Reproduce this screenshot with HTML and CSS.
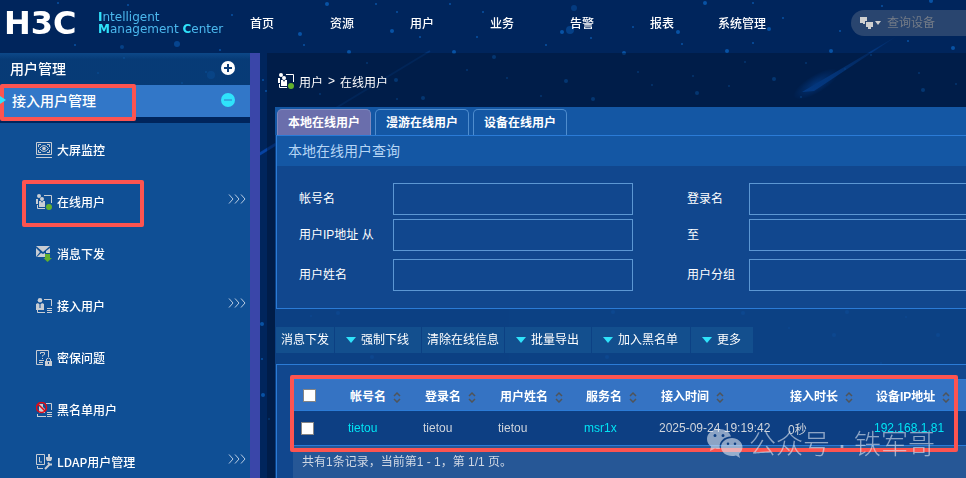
FILE: index.html
```html
<!DOCTYPE html>
<html lang="zh-CN">
<head>
    <meta charset="UTF-8">
    <meta name="viewport" content="width=device-width, initial-scale=1.0">
    <title>H3C iMC - 在线用户</title>
    <link rel="stylesheet" href="styles.css">
</head>
<body>
    <svg class="sky" aria-hidden="true">
        <defs>
            <linearGradient id="tail" x1="0" y1="1" x2="1" y2="0">
                <stop offset="0" stop-color="#0a5fd0"/>
                <stop offset="1" stop-color="#0a5fd0" stop-opacity="0"/>
            </linearGradient>
            <radialGradient id="glow">
                <stop offset="0" stop-color="#0752b8" stop-opacity=".9"/>
                <stop offset="1" stop-color="#0752b8" stop-opacity="0"/>
            </radialGradient>
        </defs>
        <path d="M802 92L900 34L814 91Z" fill="url(#tail)"/>
        <ellipse cx="816" cy="84" rx="26" ry="9" fill="url(#glow)" transform="rotate(-31 816 84)"/>
        <path d="M250 160L430 51" stroke="#0a4fa8" stroke-opacity=".35" stroke-width="2"/>
        <path d="M250 160L276 144" stroke="#0a4fc0" stroke-opacity=".6" stroke-width="3"/>
        <g fill="#0b62bd" opacity=".75">
            <circle cx="177" cy="44" r="3" opacity=".7"/><circle cx="122" cy="47" r="2" opacity=".6"/>
            <circle cx="75" cy="45" r="1"/><circle cx="220" cy="50" r="1"/><circle cx="232" cy="15" r="1"/>
            <circle cx="58" cy="3" r="1"/><circle cx="128" cy="5" r="1"/><circle cx="327" cy="4" r="2"/>
            <circle cx="376" cy="4" r="1"/><circle cx="300" cy="34" r="2"/><circle cx="304" cy="45" r="1"/>
            <circle cx="349" cy="52" r="2"/><circle cx="392" cy="31" r="2"/><circle cx="397" cy="12" r="1"/>
            <circle cx="420" cy="37" r="1"/><circle cx="454" cy="52" r="2"/><circle cx="477" cy="37" r="1"/>
            <circle cx="450" cy="4" r="1"/><circle cx="483" cy="12" r="1"/><circle cx="494" cy="57" r="2"/>
            <circle cx="562" cy="32" r="2"/><circle cx="570" cy="30" r="4" opacity=".6"/><circle cx="574" cy="8" r="3" opacity=".5"/>
            <circle cx="546" cy="45" r="1"/><circle cx="591" cy="38" r="1"/><circle cx="624" cy="53" r="2"/>
            <circle cx="633" cy="27" r="1"/><circle cx="678" cy="32" r="2"/><circle cx="682" cy="44" r="1"/>
            <circle cx="705" cy="3" r="2"/><circle cx="727" cy="51" r="2"/><circle cx="753" cy="43" r="1"/>
            <circle cx="769" cy="29" r="2"/><circle cx="753" cy="3" r="1"/><circle cx="783" cy="18" r="1"/>
            <circle cx="831" cy="51" r="2"/><circle cx="840" cy="31" r="1"/><circle cx="882" cy="6" r="1"/>
            <circle cx="931" cy="1" r="2"/><circle cx="953" cy="48" r="2"/><circle cx="908" cy="41" r="1"/>
            <circle cx="871" cy="55" r="1"/><circle cx="845" cy="69" r="1"/><circle cx="774" cy="79" r="2"/>
            <circle cx="806" cy="63" r="1"/><circle cx="801" cy="97" r="1"/><circle cx="697" cy="93" r="2"/>
            <circle cx="638" cy="72" r="1"/><circle cx="652" cy="85" r="1"/><circle cx="693" cy="76" r="1"/>
            <circle cx="729" cy="86" r="1"/><circle cx="745" cy="62" r="1"/><circle cx="923" cy="90" r="2"/>
            <circle cx="919" cy="73" r="1"/><circle cx="956" cy="84" r="1"/><circle cx="593" cy="99" r="2"/>
            <circle cx="566" cy="81" r="2"/><circle cx="541" cy="96" r="1"/><circle cx="507" cy="78" r="1"/>
            <circle cx="467" cy="70" r="1"/><circle cx="423" cy="98" r="2"/><circle cx="396" cy="80" r="2"/>
            <circle cx="397" cy="99" r="1"/><circle cx="320" cy="94" r="1"/><circle cx="367" cy="63" r="1"/>
            <circle cx="263" cy="80" r="1"/><circle cx="266" cy="91" r="1"/><circle cx="262" cy="324" r="2"/>
            <circle cx="262" cy="359" r="1"/><circle cx="263" cy="395" r="2"/><circle cx="269" cy="419" r="1"/>
            <circle cx="211" cy="75" r="4" opacity=".7"/><circle cx="206" cy="72" r="1"/><circle cx="182" cy="83" r="1"/>
            <circle cx="124" cy="58" r="1"/><circle cx="98" cy="73" r="1"/><circle cx="338" cy="313" r="2"/>
            <circle cx="372" cy="357" r="2"/><circle cx="311" cy="316" r="1"/><circle cx="613" cy="312" r="2"/>
            <circle cx="743" cy="313" r="2"/><circle cx="834" cy="335" r="2"/><circle cx="847" cy="312" r="2"/>
            <circle cx="906" cy="317" r="1"/><circle cx="938" cy="335" r="2"/><circle cx="789" cy="328" r="1"/>
            <circle cx="607" cy="357" r="2"/><circle cx="881" cy="363" r="1"/>
        </g>
    </svg>

    <!-- shared icons -->
    <svg class="defs" aria-hidden="true">
        <symbol id="i-online" viewBox="0 0 16 16">
            <circle cx="3" cy="2" r="2"/><circle cx="6" cy="5" r="2"/>
            <path d="M0 5h2v5H0zM3 7l2 0 1 2 1-2h2v6H3z"/>
            <path d="M8 1.500h7.500V9M1.500 11v3.500H9" fill="none" stroke="currentColor"/>
            <circle cx="13" cy="13" r="3" fill="#62b02c"/>
        </symbol>
        <symbol id="i-list" viewBox="0 0 16 16">
            <circle cx="4" cy="2.300" r="2.300"/>
            <path d="M0 6l2-1 2 2 2-2 2 1v6H0z"/>
            <path d="M4 7v3" stroke="#0f4f95"/>
            <path d="M8 1.500h7.500V8M1.500 12v2.500H9M11 10.500h5M11 12.500h5M11 14.500h5" fill="none" stroke="currentColor"/>
        </symbol>
        <symbol id="i-more" viewBox="0 0 18 10">
            <path d="M1 .5l4 4.500-4 4.500M7 .5l4 4.500-4 4.500M13 .5l4 4.500-4 4.500" fill="none" stroke="currentColor"/>
        </symbol>
        <symbol id="i-sort" viewBox="0 0 8 12">
            <path d="M1 5l3-3 3 3M1 8l3 3 3-3" fill="none" stroke="currentColor" stroke-width="1.500"/>
        </symbol>
    </svg>

    <header class="header">
        <div class="logo">H3C</div>
        <div class="tagline"><b>I</b>ntelligent<br><b>M</b>anagement <b>C</b>enter</div>
        <nav class="nav">
            <a href="#">首页</a>
            <a href="#">资源</a>
            <a href="#">用户</a>
            <a href="#">业务</a>
            <a href="#">告警</a>
            <a href="#">报表</a>
            <a href="#">系统管理</a>
        </nav>
        <div class="search">
            <svg width="22" height="14" viewBox="0 0 22 14" fill="#d0d0d0" aria-hidden="true">
                <path d="M0 1h7v4H5v3H3V7H0zM6 6h7v5h-2v2H8v-2H6zM15 5h6l-3 4z"/>
            </svg>
            <input type="text" placeholder="查询设备" aria-label="查询设备">
        </div>
    </header>

    <div class="page">
        <aside class="sidebar">
            <button class="group">用户管理
                <svg width="14" height="14" viewBox="0 0 14 14" aria-hidden="true"><circle cx="7" cy="7" r="7" fill="#fff"/><path d="M3 7h8M7 3v8" stroke="#0b3c78" stroke-width="2"/></svg>
            </button>
            <button class="group group-open">接入用户管理
                <svg width="14" height="14" viewBox="0 0 14 14" aria-hidden="true"><circle cx="7" cy="7" r="7" fill="#2fe3fb"/><path d="M3 7h8" stroke="#3277c8" stroke-width="1"/></svg>
                <span class="mark mark-group"></span>
            </button>
            <nav class="menu">
                <a href="#">
                    <svg class="icon" viewBox="0 0 16 16"><path d="M.5 .5h15v12H.5zM0 15.500h16M2.500 5V2.500H5M11 2.500h2.500V5M2.500 8v2.500H5M11 10.500h2.500V8M3.500 6.500q4.500-6 9 0q-4.500 6-9 0z" fill="none" stroke="currentColor"/><circle cx="8" cy="6.500" r="1.800"/></svg>
                    大屏监控
                </a>
                <a href="#">
                    <svg class="icon"><use href="#i-online"/></svg>
                    在线用户
                    <svg class="more"><use href="#i-more"/></svg>
                    <span class="mark mark-item"></span>
                </a>
                <a href="#">
                    <svg class="icon" viewBox="0 0 16 16"><path d="M0 0h14L7 6zM0 2l4 4-4 5zM14 2v5h-4V5zM1 11l4-4 2 1 2-1v4z"/><path d="M9 8h5v4h2l-4.500 4L7.500 12H9z" fill="#62b02c"/></svg>
                    消息下发
                </a>
                <a href="#">
                    <svg class="icon"><use href="#i-list"/></svg>
                    接入用户
                    <svg class="more"><use href="#i-more"/></svg>
                </a>
                <a href="#">
                    <svg class="icon" viewBox="0 0 16 16"><path d="M7 14.500H.5V.5h12V7M4.500 4V2.500h4v2l-2 1v1M6 8.500h1M3 10.500h5M3 12.500h4" fill="none" stroke="currentColor"/><path d="M9 11h7v5H9z"/><path d="M10.500 11V9q2-2 4 0v2" fill="none" stroke="currentColor"/><path d="M12.500 12v2" stroke="#0f4f95"/></svg>
                    密保问题
                </a>
                <a href="#">
                    <svg class="icon" viewBox="0 0 16 16"><path d="M3 2h4v3l2 2v4H3zM1 12h1v2h8v1H1z"/><path d="M10 1.500h5.500V8M11 10.500h5M11 12.500h5M11 14.500h5" fill="none" stroke="currentColor"/><circle cx="5.500" cy="5.500" r="5" fill="none" stroke="#e00b14" stroke-width="1.500"/><path d="M2 2l7 7" stroke="#e00b14" stroke-width="1.500"/></svg>
                    黑名单用户
                </a>
                <a href="#">
                    <svg class="icon" viewBox="0 0 16 16"><path d="M.5 .5h8v10h-8zM3.500 3v5H6M1.500 12v2.500H7" fill="none" stroke="currentColor"/><path d="M12 0h2v3h2v2l-1 2h-4l-1-2V3h2z"/><path d="M9 15l5-5M12 8.500l1.500 2 2.500 0" fill="none" stroke="currentColor" stroke-width="2"/></svg>
                    LDAP用户管理
                    <svg class="more"><use href="#i-more"/></svg>
                </a>
            </nav>
        </aside>
        <div class="splitter"></div>

        <main class="main">
            <div class="crumbs">
                <svg class="icon"><use href="#i-online"/></svg>
                <span>用户</span>
                <span>&gt;</span>
                <span>在线用户</span>
            </div>

            <div class="content">
                <div class="tabs">
                    <button class="tab tab-active">本地在线用户</button>
                    <button class="tab">漫游在线用户</button>
                    <button class="tab">设备在线用户</button>
                </div>

                <section class="query">
                    <h2>本地在线用户查询</h2>
                    <form class="fields">
                        <label for="account">帐号名</label>
                        <input type="text" id="account">
                        <label for="login">登录名</label>
                        <input type="text" id="login">
                        <label for="ipFrom">用户IP地址 从</label>
                        <input type="text" id="ipFrom">
                        <label for="ipTo">至</label>
                        <input type="text" id="ipTo">
                        <label for="userName">用户姓名</label>
                        <input type="text" id="userName">
                        <label for="userGroup">用户分组</label>
                        <input type="text" id="userGroup">
                    </form>
                </section>

                <div class="toolbar">
                    <button>消息下发</button>
                    <button class="drop">强制下线</button>
                    <button>清除在线信息</button>
                    <button class="drop">批量导出</button>
                    <button class="drop">加入黑名单</button>
                    <button class="drop">更多</button>
                </div>

                <section class="result">
                    <table>
                        <colgroup>
                            <col class="c-check"><col class="c-name"><col class="c-name"><col class="c-mid"><col class="c-name"><col class="c-time"><col class="c-mid"><col>
                        </colgroup>
                        <thead>
                            <tr>
                                <th><input type="checkbox" aria-label="全选"></th>
                                <th>帐号名<svg class="sort"><use href="#i-sort"/></svg></th>
                                <th>登录名<svg class="sort"><use href="#i-sort"/></svg></th>
                                <th>用户姓名<svg class="sort"><use href="#i-sort"/></svg></th>
                                <th>服务名<svg class="sort"><use href="#i-sort"/></svg></th>
                                <th>接入时间<svg class="sort"><use href="#i-sort"/></svg></th>
                                <th>接入时长<svg class="sort"><use href="#i-sort"/></svg></th>
                                <th>设备IP地址<svg class="sort"><use href="#i-sort"/></svg></th>
                            </tr>
                        </thead>
                        <tbody>
                            <tr>
                                <td><input type="checkbox" aria-label="选择 tietou"></td>
                                <td><a href="#">tietou</a></td>
                                <td>tietou</td>
                                <td>tietou</td>
                                <td><a href="#">msr1x</a></td>
                                <td>2025-09-24 19:19:42</td>
                                <td>0秒</td>
                                <td><a href="#">192.168.1.81</a></td>
                            </tr>
                        </tbody>
                    </table>
                    <div class="summary">共有1条记录，当前第1 - 1，第 1/1 页。</div>
                    <span class="mark mark-table"></span>
                    <div class="watermark">
                        <svg width="36" height="30" viewBox="0 0 36 30" aria-hidden="true">
                            <path fill-rule="evenodd" d="M12 1C5 1 0 5.500 0 11c0 3 1.500 5.500 4 7.500L3 23l5-2.500q2 .6 5 .5C11 14 17 8.500 24 8.500 23 4 18 1 12 1zM8 6a1.500 1.500 0 1 1 0 3 1.500 1.500 0 0 1 0-3zM16 6a1.500 1.500 0 1 1 0 3 1.500 1.500 0 0 1 0-3z"/>
                            <path fill-rule="evenodd" d="M25 10c-6 0-11 4-11 9s5 9 11 9q2 0 4-.6L33 30l-1-4c2-2 3.500-4 3.500-7 0-5-5-9-10.500-9zM21 14.500a1.300 1.300 0 1 1 0 2.600 1.300 1.300 0 0 1 0-2.600zM28 14.500a1.300 1.300 0 1 1 0 2.600 1.300 1.300 0 0 1 0-2.600z"/>
                        </svg>
                        公众号 · 铁军哥
                    </div>
                </section>
            </div>
        </main>
    </div>
</body>
</html>
```
FILE: styles.css
```css
* {
    box-sizing: border-box;
}
body {
    display: flex;
    flex-direction: column;
    height: 100vh;
    margin: 0;
    overflow: hidden;
    background: #00255c;
    color: #fff;
    font-family: "Liberation Sans", "Noto Sans CJK SC", sans-serif;
    font-size: 12px;
}
a {
    color: inherit;
    text-decoration: none;
}
button, input {
    font: inherit;
    color: inherit;
}
button {
    border: 0;
    cursor: pointer;
}
.sky {
    position: absolute;
    top: 0;
    left: 0;
    z-index: -1;
    width: 100%;
    height: 100%;
}
.defs {
    position: absolute;
    width: 0;
    height: 0;
}
.icon {
    width: 16px;
    height: 16px;
    flex: none;
    fill: currentColor;
    color: #c8cdd4;
}

/* header */
.header {
    display: flex;
    flex: none;
    align-items: center;
    height: 53px;
    padding-left: 4px;
    padding-bottom: 8px;
}
.logo {
    flex: none;
    width: 94px;
    font: bold 32px/32px "DejaVu Sans", sans-serif;
}
.tagline {
    flex: none;
    width: 124px;
    color: #4bb8ee;
    font: 12px/12px "DejaVu Sans", sans-serif;
    white-space: nowrap;
}
.tagline b {
    color: #2fe3fb;
}
.nav {
    display: flex;
    flex: none;
    font-weight: 500;
}
.nav a {
    width: 80px;
    text-align: center;
}
.search {
    display: flex;
    flex: 1;
    align-items: center;
    gap: 5px;
    height: 26px;
    min-width: 0;
    margin-left: 69px;
    padding-left: 9px;
    border-radius: 13px 0 0 13px;
    background: #29456f;
}
.search svg {
    flex: none;
}
.search input {
    flex: 1;
    min-width: 0;
    padding: 0;
    border: 0;
    background: none;
}
.search input::placeholder {
    color: #737b87;
}

/* sidebar */
.page {
    display: flex;
    flex: 1;
    min-height: 0;
}
.sidebar {
    display: flex;
    flex-direction: column;
    flex: none;
    width: 250px;
}
.group {
    position: relative;
    display: flex;
    flex: none;
    align-items: center;
    justify-content: space-between;
    height: 32px;
    padding: 0 15px 2px 10px;
    background: linear-gradient(rgba(18, 87, 156, .7), rgba(10, 68, 130, .7) 20%);
    font-size: 14px;
    font-weight: 500;
}
.group-open {
    padding-left: 12px;
    margin-bottom: 6px;
    background: #3277c8;
}
.group-open::before {
    content: "";
    position: absolute;
    left: 0;
    top: 11px;
    z-index: 1;
    border: 4px solid transparent;
    border-left: 6px solid #2fe3fb;
}
.menu {
    flex: 1;
    background: #0f4f95;
    font-family: "Noto Sans CJK SC", sans-serif;
    font-weight: 500;
}
.menu a {
    position: relative;
    display: flex;
    align-items: center;
    gap: 5px;
    height: 52px;
    padding: 0 4px 0 36px;
}
.menu .icon {
    margin-top: 2px;
}
.more {
    width: 18px;
    height: 10px;
    margin: 0 0 4px auto;
    color: #b8cbe2;
}
.splitter {
    flex: none;
    width: 10px;
    background: #3a46a9;
}

/* red call-outs drawn over the page */
.mark {
    position: absolute;
    border: 4px solid #fd5450;
    border-radius: 2px;
    pointer-events: none;
}
.mark-group {
    left: 0;
    top: -1px;
    width: 136px;
    height: 37px;
}
.mark-item {
    left: 22px;
    top: 5px;
    width: 122px;
    height: 47px;
}
.mark-table {
    left: 13px;
    top: 10px;
    width: 668px;
    height: 77px;
}

/* main */
.main {
    display: flex;
    flex: 1;
    flex-direction: column;
    min-width: 0;
    margin-left: 7px;
    padding-left: 8px;
    background: rgba(0, 20, 50, .45);
}
.crumbs {
    display: flex;
    flex: none;
    align-items: center;
    gap: 5px;
    height: 54px;
    padding: 2px 0 0 3px;
}
.crumbs .icon {
    color: #fff;
}
.content {
    flex: 1;
    overflow: hidden;
    background: rgba(16, 76, 152, .75);
}
.tabs {
    display: flex;
    gap: 4px;
    padding: 2px 0 0 2px;
    background: #1457a4;
}
.tab {
    width: 94px;
    height: 26px;
    padding: 0 0 3px;
    border: 1px solid #4f8dce;
    border-bottom: 0;
    border-radius: 5px 5px 0 0;
    background: none;
    font-weight: bold;
}
.tab-active {
    border-color: #8088bd;
    background: #6a6eac;
}
.query {
    margin-left: 1px;
    border: 1px solid #2b7bd6;
    border-right: 0;
    background: #11478e;
}
.query h2 {
    margin: 0;
    padding-left: 11px;
    background: #1457a4;
    color: #b5d5f5;
    font-size: 14px;
    font-weight: normal;
    line-height: 30px;
}
.fields {
    display: grid;
    grid-template-columns: 94px 294px 62px 240px;
    grid-template-rows: 32px 32px 36px;
    row-gap: 4px;
    align-items: end;
    padding: 17px 0 17px 22px;
    line-height: 32px;
}
.fields input {
    width: 240px;
    height: 32px;
    padding: 0 8px;
    border: 1px solid #5c97d3;
    background: none;
}
.toolbar {
    display: flex;
    gap: 1px;
    margin: 18px 0 11px 1px;
}
.toolbar button {
    height: 26px;
    padding: 0 5px 3px;
    background: #134f8e;
    white-space: nowrap;
}
.toolbar .drop {
    padding: 0 12px 3px 11px;
}
.drop::before {
    content: "";
    display: inline-block;
    margin-right: 5px;
    border: 5px solid transparent;
    border-top: 6px solid #2fe3fb;
    border-bottom: 0;
    vertical-align: 1px;
}
.result {
    position: relative;
    margin-left: 1px;
    padding: 14px 0 0 16px;
    border: 1px solid #2b7bd6;
    border-right: 0;
    background: #11478e;
}
table {
    width: 100%;
    border-collapse: collapse;
    table-layout: fixed;
    white-space: nowrap;
}
tr {
    border-top: 1px solid #2b7bd6;
    border-bottom: 1px solid #2b7bd6;
}
.c-check {
    width: 49px;
}
.c-name {
    width: 75px;
}
.c-mid {
    width: 86px;
}
.c-time {
    width: 129px;
}
th, td {
    padding: 0 6px;
    text-align: left;
}
th {
    height: 31px;
    padding-left: 8px;
    background: #3573c3;
}
td {
    height: 35px;
    background: #0d3f83;
    color: #d0d5dc;
}
th:first-child {
    padding-left: 10px;
}
td:first-child {
    padding-left: 8px;
}
td a {
    color: #00e4f4;
}
table input {
    display: block;
    width: 13px;
    height: 13px;
    margin: 0;
    border: 1px solid #858585;
    background: #fff;
    appearance: none;
}
table input:checked {
    background: #3573c3;
    box-shadow: inset 0 0 0 2px #fff;
}
.sort {
    width: 8px;
    height: 12px;
    margin-left: 7px;
    color: #505459;
    vertical-align: -2px;
}
.summary {
    padding-left: 9px;
    background: #265796;
    color: #d0d8e4;
    line-height: 32px;
}
.watermark {
    position: absolute;
    left: 430px;
    top: 58px;
    display: flex;
    align-items: center;
    gap: 6px;
    color: rgba(225, 232, 242, .6);
    fill: currentColor;
    font-size: 27px;
    font-weight: 300;
    white-space: nowrap;
}
```
